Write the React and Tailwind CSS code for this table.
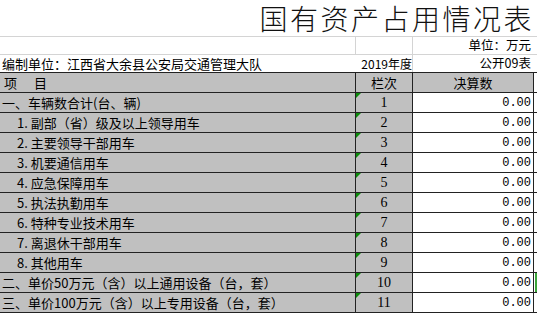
import React from "react";

const rows = [
  { label: "一、车辆数合计(台、辆)", indent: false, n: "1" },
  { label: "1. 副部（省）级及以上领导用车", indent: true, n: "2" },
  { label: "2. 主要领导干部用车", indent: true, n: "3" },
  { label: "3. 机要通信用车", indent: true, n: "4" },
  { label: "4. 应急保障用车", indent: true, n: "5" },
  { label: "5. 执法执勤用车", indent: true, n: "6" },
  { label: "6. 特种专业技术用车", indent: true, n: "7" },
  { label: "7. 离退休干部用车", indent: true, n: "8" },
  { label: "8. 其他用车", indent: true, n: "9" },
  { label: "二、单价50万元（含）以上通用设备（台，套）", indent: false, n: "10", sel: true },
  { label: "三、单价100万元（含）以上专用设备（台，套）", indent: false, n: "11" },
];

const cjk = { fontFamily: '"Noto Sans CJK SC", "Noto Sans", sans-serif' };
const serif = { fontFamily: '"Liberation Serif", "Noto Sans CJK SC", serif' };
const mono = { fontFamily: '"Liberation Mono", monospace' };

export default function App() {
  return (
    <div className="w-[537px] h-[313px] bg-white overflow-hidden text-black text-[13px] leading-none" style={cjk}>
      {/* title */}
      <div className="h-[37px] border-b border-[#d4d4d4] flex items-start justify-end pr-[3px] pt-[4px]">
        <span className="text-[28px] leading-[28px] tracking-[2.5px] text-[#111] font-light whitespace-nowrap">国有资产占用情况表</span>
      </div>
      {/* unit row */}
      <div className="h-[18px] flex border-b border-[#d4d4d4]">
        <div className="w-[356px] border-r border-[#d4d4d4]" />
        <div className="w-[57px] border-r border-[#d4d4d4]" />
        <div className="w-[120px] flex items-center justify-end pr-[2px] text-[12.5px]">单位：万元</div>
      </div>
      {/* org row */}
      <div className="h-[17px] flex">
        <div className="w-[356px] flex items-center pl-[2px] whitespace-nowrap">编制单位：江西省大余县公安局交通管理大队</div>
        <div className="w-[57px] border-r border-[#d4d4d4] flex items-center justify-end whitespace-nowrap text-[12px] leading-[16px]">
          2019年度
        </div>
        <div className="w-[120px] flex items-center justify-end pr-[2px] whitespace-nowrap text-[12.5px]">
          公开09表
        </div>
      </div>
      {/* header */}
      <div className="h-[21px] flex border-y border-[#222]">
        <div className="w-[356px] bg-[#c0c0c0] border-r border-[#222] flex items-center pl-[4px] gap-[17px]">
          <span>项</span><span>目</span>
        </div>
        <div className="w-[57px] bg-[#c0c0c0] border-r border-[#222] flex items-center justify-center">栏次</div>
        <div className="w-[121px] bg-[#c0c0c0] border-r border-[#222] flex items-center justify-center">决算数</div>
        <div className="flex-1" />
      </div>
      {rows.map((r) => (
        <div key={r.n} className="h-[20px] flex border-b border-[#222]">
          <div className={`w-[356px] bg-[#c0c0c0] border-r border-[#222] flex items-center whitespace-nowrap ${r.indent ? "pl-[17px]" : "pl-[2px]"}`}>
            {r.label}
          </div>
          <div className="relative w-[57px] bg-[#c0c0c0] border-r border-[#222] flex items-center justify-center text-[14px]" style={serif}>
            <svg className="absolute left-0 top-0" width="5" height="5" viewBox="0 0 5 5">
              <polygon points="0,0 5,0 0,5" fill="#0a8a0a" />
            </svg>
            {r.n}
          </div>
          <div className="w-[121px] bg-white border-r border-[#222] flex items-center justify-end pr-[2px] text-[12px]" style={mono}>
            0.00
          </div>
          <div className="flex-1 flex">
            {r.sel && <div className="w-[2px] ml-[1px] h-full bg-[#3aa53a]" />}
          </div>
        </div>
      ))}
    </div>
  );
}
